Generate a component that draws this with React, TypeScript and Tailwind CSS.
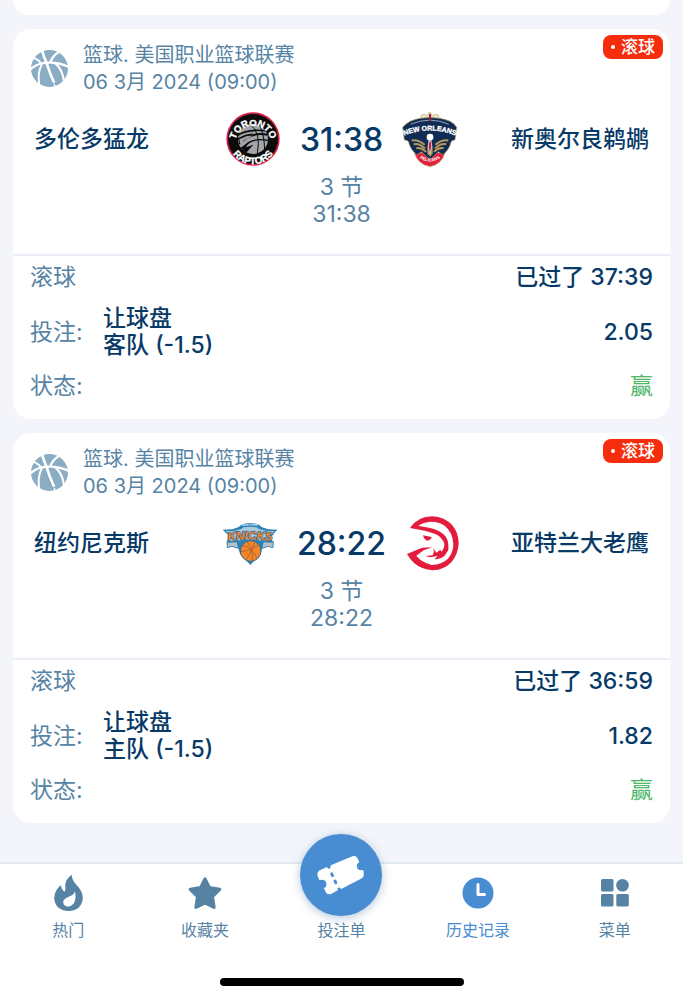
import React from "react";

type Bet = {
  home: string;
  away: string;
  homeLogo: React.ReactNode;
  awayLogo: React.ReactNode;
  score: string;
  elapsed: string;
  pick: string;
  odds: string;
};

function BasketballIcon() {
  return (
    <svg viewBox="92 149 112 112" className="size-[37px] shrink-0" aria-hidden="true">
      <circle cx="148" cy="205" r="56" fill="#8badc4" />
      <g fill="none" stroke="#fff" strokeWidth="7">
        <path d="M88 209 Q112 186 150 187 Q182 188 208 201" />
        <path d="M124 146 Q131 170 139 188 Q148 218 162 248" strokeWidth="8" />
        <path d="M162 252 L166 264" strokeWidth="4" />
        <path d="M100 173 Q119 180 124 194 Q111 218 117 256" strokeWidth="6" />
        <path d="M178 154 Q157 166 150 187" />
        <path d="M164 188 Q188 208 192 244" strokeWidth="6" />
      </g>
    </svg>
  );
}

function RaptorsLogo() {
  return (
    <svg viewBox="22 23 162 162" className="size-[54px]" role="img" aria-label="Toronto Raptors">
      <defs>
        <path id="raptors-top" d="M49 118 A54 54 0 1 1 157 118" />
        <path id="raptors-bottom" d="M31 95 A73 73 0 1 0 175 95" />
      </defs>
      <circle cx="103" cy="104" r="80" fill="#d21f45" />
      <circle cx="103" cy="104" r="75" fill="#0b0b0c" />
      <circle cx="103" cy="104" r="45" fill="#a3a5a8" />
      <g fill="none" stroke="#0b0b0c">
        <path d="M56 94 Q84 72 147 80" strokeWidth="5" />
        <path d="M62 119 Q92 82 147 91" strokeWidth="6" />
        <path d="M73 134 Q92 98 149 108" strokeWidth="4" />
        <path d="M94 60 Q128 82 116 148" strokeWidth="3" />
        <path d="M120 60 Q136 82 138 134" strokeWidth="3" />
      </g>
      <path d="M57 102 L80 91 L104 87 L86 100 L64 120 Z M66 130 L91 112 L82 129 L104 121 L82 146 Z" fill="#0b0b0c" />
      <path d="M62 105 L85 95 L101 94 L76 108 L66 124 Z" fill="#a3a5a8" />
      <g fill="#fff" stroke="#fff" strokeWidth="1" fontFamily="Liberation Sans, sans-serif" fontWeight="700" fontSize="29" textAnchor="middle">
        <text><textPath href="#raptors-top" startOffset="50%">TORONTO</textPath></text>
        <text><textPath href="#raptors-bottom" startOffset="50%">RAPTORS</textPath></text>
      </g>
    </svg>
  );
}

function PelicansLogo() {
  return (
    <svg viewBox="33 20 174 170" className="h-[57px] w-[58px]" role="img" aria-label="New Orleans Pelicans">
      <defs>
        <path id="pelicans-name" d="M38 95 Q119 61 201 95" />
        <path id="pelicans-sub" d="M76 150 Q119 192 164 150" />
      </defs>
      <path d="M92 38 Q98 22 111 35 L119 22 L128 35 Q141 22 147 38 L141 44 H98 Z" fill="#f4e9cf" stroke="#b4975a" strokeWidth="2" />
      <path d="M73 145 H165 Q154 181 120 186 Q85 181 73 145 Z" fill="#e2203f" stroke="#b4975a" strokeWidth="2" />
      <path d="M38 68 Q48 57 61 50 Q86 39 119 39 Q154 39 180 50 Q193 57 200 68 L195 106 Q183 109 183 113 Q178 136 158 151 L145 142 L120 166 L94 142 L81 151 Q61 136 56 113 Q55 108 43 106 Z" fill="#102c54" stroke="#b4975a" strokeWidth="2" />
      <path d="M62 59 Q119 35 176 59" fill="none" stroke="#d8dfe9" strokeWidth="2" />
      <text fill="#fff" stroke="#fff" strokeWidth="1" fontFamily="Liberation Sans, sans-serif" fontWeight="700" fontSize="21" textAnchor="middle">
        <textPath href="#pelicans-name" startOffset="50%">NEW ORLEANS</textPath>
      </text>
      <g fill="none" stroke="#b4975a" strokeWidth="6">
        <path d="M65 108 Q84 104 104 121" />
        <path d="M71 119 Q88 115 105 132" />
        <path d="M79 131 Q94 127 108 142" />
        <path d="M175 108 Q156 104 136 121" />
        <path d="M169 119 Q152 115 135 132" />
        <path d="M161 131 Q146 127 132 142" />
      </g>
      <path d="M112 128 H128 V148 L120 157 L112 148 Z" fill="#b4975a" />
      <circle cx="120" cy="98" r="10" fill="#fff" />
      <path d="M116 107 H124 L127 125 L120 151 L113 125 Z" fill="#d8dfe9" />
      <path d="M118 112 L123 112 L124 127 L120 144 L116 127 Z" fill="#c8213c" />
      <path d="M117 31 L120 26 L123 31 L124 49 H116 Z" fill="#8d2340" />
      <text fill="#fff" fontFamily="Liberation Sans, sans-serif" fontWeight="700" fontSize="13" textAnchor="middle">
        <textPath href="#pelicans-sub" startOffset="50%">PELICANS</textPath>
      </text>
    </svg>
  );
}

function KnicksLogo() {
  return (
    <svg viewBox="12 32 168 135" className="h-[45px] w-[56px]" role="img" aria-label="New York Knicks">
      <defs>
        <path id="knicks-name" d="M20 93 Q96 82 172 93" />
        <path id="knicks-city" d="M60 48 Q96 44 132 48" />
      </defs>
      <path d="M27 94 L59 88 L61 114 L42 108 L28 112 Z M166 94 L134 88 L132 114 L151 108 L165 112 Z" fill="#b9bfc4" stroke="#3486b8" strokeWidth="3" />
      <path d="M14 58 L42 57 L61 51 L72 42 Q96 34 121 42 L132 51 L151 57 L178 58 L159 78 L164 97 L137 96 L128 130 L97 164 L66 130 L56 96 L29 97 L34 78 Z" fill="#2b80b5" />
      <path d="M23 62 L45 62 L70 56 L76 51 Q96 47 117 51 L123 56 L148 62 L170 62 L154 77 L158 92 L138 92 L122 90 L97 88 L70 90 L54 92 L35 92 L39 78 Z" fill="#a9cadd" />
      <text fill="#f58426" stroke="#1f6a9d" strokeWidth="4" paintOrder="stroke" fontFamily="Liberation Sans, sans-serif" fontStyle="italic" fontWeight="700" fontSize="35" textAnchor="middle">
        <textPath href="#knicks-name" startOffset="50%">KNICKS</textPath>
      </text>
      <text fill="#fff" fontFamily="Liberation Sans, sans-serif" fontWeight="700" fontSize="9" textAnchor="middle">
        <textPath href="#knicks-city" startOffset="50%">NEW YORK</textPath>
      </text>
      <circle cx="98" cy="122" r="31" fill="#f58426" stroke="#2b6e9c" strokeWidth="3" />
      <g fill="none" stroke="#8a5a45" strokeWidth="2">
        <path d="M68 124 Q96 123 122 102 M86 93 Q106 114 103 153 M72 106 Q94 103 119 145 M111 94 Q101 124 84 150" />
      </g>
    </svg>
  );
}

function HawksLogo() {
  return (
    <svg viewBox="48 15 162 168" className="h-[56px] w-[54px]" role="img" aria-label="Atlanta Hawks">
      <path
        fill="#e31b3d"
        d="M60 54 Q82 20 127 19 Q164 21 187 46 Q205 67 206 99 Q205 133 184 157 Q162 180 128 181 Q95 179 73 160 Q60 148 51 132 L92 115 Q104 112 126 112 L101 121 L79 137 Q93 156 125 165 Q155 164 174 146 Q190 128 190 103 Q188 66 164 47 Q145 34 121 35 Q100 37 84 47 L121 54 Q153 61 168 81 Q177 96 175 120 L164 137 Q149 150 134 147 L143 138 L120 142 L107 138 L128 136 Q134 125 130 115 L139 128 L151 119 L154 125 Q164 114 163 101 Q157 83 138 73 Q115 63 60 54 Z"
      />
      <path d="M99 76 L125 81 Q123 91 111 92 Q102 89 99 76 Z" fill="#e31b3d" />
    </svg>
  );
}

const bets: Bet[] = [
  {
    home: "多伦多猛龙",
    away: "新奥尔良鹈鹕",
    homeLogo: <RaptorsLogo />,
    awayLogo: <PelicansLogo />,
    score: "31:38",
    elapsed: "37:39",
    pick: "客队 (-1.5)",
    odds: "2.05",
  },
  {
    home: "纽约尼克斯",
    away: "亚特兰大老鹰",
    homeLogo: <KnicksLogo />,
    awayLogo: <HawksLogo />,
    score: "28:22",
    elapsed: "36:59",
    pick: "主队 (-1.5)",
    odds: "1.82",
  },
];

function BetCard({ bet }: { bet: Bet }) {
  return (
    <article className="rounded-[18px] bg-white text-[23px] leading-[27px] text-[#5784a5]">
      <header className="flex items-start pt-[13px] pr-[7px] pl-[18px] text-[20px]">
        <div className="mt-2">
          <BasketballIcon />
        </div>
        <div className="ml-[15px] flex-1">
          <p>篮球. 美国职业篮球联赛</p>
          <p>06 3月 2024 (09:00)</p>
        </div>
        <span className="-mt-[7px] flex h-6 items-center gap-[6px] rounded-[8px] bg-[#f52d0c] px-2 text-[17px] font-medium text-white">
          <span className="size-1 rounded-full bg-white" />
          滚球
        </span>
      </header>

      <div className="mt-[13px] grid grid-cols-[1fr_auto_1fr] items-center px-[21px] text-[#083a68]">
        <h2 className="font-medium">{bet.home}</h2>
        <div className="flex h-[60px] items-center gap-[18px]">
          <div className="flex w-[58px] justify-center">{bet.homeLogo}</div>
          <strong className="text-[32px] font-medium">{bet.score}</strong>
          <div className="flex w-[58px] justify-center">{bet.awayLogo}</div>
        </div>
        <h2 className="text-right font-medium">{bet.away}</h2>
      </div>

      <div className="mt-[5px] border-b-2 border-[#e9eff4] pb-[26px] text-center">
        <p>3 节</p>
        <p>{bet.score}</p>
      </div>

      <dl className="flex flex-col gap-[14px] pt-2 pr-[17px] pb-[19px] pl-[17px]">
        <div className="flex justify-between">
          <dt>滚球</dt>
          <dd className="font-medium text-[#083a68]">已过了 {bet.elapsed}</dd>
        </div>
        <div className="flex items-center">
          <dt className="w-[73px]">投注:</dt>
          <dd className="flex-1 font-medium text-[#083a68]">
            让球盘
            <br />
            {bet.pick}
          </dd>
          <dd className="font-medium text-[#083a68]">{bet.odds}</dd>
        </div>
        <div className="flex justify-between">
          <dt>状态:</dt>
          <dd className="text-[#4db769]">赢</dd>
        </div>
      </dl>
    </article>
  );
}

function FlameIcon() {
  return (
    <svg viewBox="162 42 92 114" className="h-[38px] w-[31px]" aria-hidden="true">
      <path
        fill="#5682a3"
        fillRule="evenodd"
        d="M218 44 Q217 58 232 75 Q251 94 251 113 Q248 151 208 153 Q168 151 165 114 Q166 92 185 75 Q187 90 196 95 Q200 91 198 76 Q199 57 218 44 Z M227 94 Q226 105 207 111 Q193 117 192 126 Q193 139 207 140 Q226 138 229 114 Q230 102 227 94 Z"
      />
    </svg>
  );
}

function StarIcon() {
  return (
    <svg viewBox="563 44 102 102" className="size-[34px]" aria-hidden="true">
      <path
        d="M614 53 L627 79 L658 84 L636 106 L641 138 L614 124 L587 138 L592 106 L570 84 L601 79 Z"
        fill="#5682a3"
        stroke="#5682a3"
        strokeWidth="10"
        strokeLinejoin="round"
      />
    </svg>
  );
}

function ClockIcon() {
  return (
    <svg viewBox="0 0 32 32" className="size-[32px]" aria-hidden="true">
      <circle cx="16" cy="16" r="15.5" fill="#488cd2" />
      <path d="M16 7.5 V17.5 H22.5" fill="none" stroke="#fff" strokeWidth="3" strokeLinecap="round" strokeLinejoin="round" />
    </svg>
  );
}

function MenuIcon() {
  return (
    <svg viewBox="0 0 28 28" className="size-[28px]" fill="#5682a3" aria-hidden="true">
      <rect x="0" y="0" width="12.5" height="12.5" rx="1.5" />
      <circle cx="21.5" cy="6.3" r="6.3" />
      <rect x="0" y="15" width="12.5" height="12.5" rx="1.5" />
      <rect x="15.3" y="15" width="12.5" height="12.5" rx="1.5" />
    </svg>
  );
}

function TicketIcon() {
  return (
    <svg viewBox="83 88 144 121" className="h-[40px] w-[48px]" aria-hidden="true">
      <path
        fill="#fff"
        stroke="#fff"
        strokeWidth="4"
        strokeLinejoin="round"
        d="M90 137 L112 127 Q119 135 125 121 L190 94 Q199 91 203 98 L208 109 Q196 116 203 130 Q210 138 221 136 L222 149 Q222 154 216 157 L156 188 Q148 185 144 193 L124 204 Q116 207 111 200 L106 189 Q117 182 111 168 Q104 158 91 162 L86 150 Q84 141 90 137 Z"
      />
      <g stroke="#488cd2" strokeWidth="9" strokeLinecap="round">
        <path d="M117 120 L119 125" />
        <path d="M127 145 L129 150" />
        <path d="M137 167 L139 172" />
        <path d="M149 191 L151 196" />
      </g>
    </svg>
  );
}

function NavItem({ label, icon, active = false }: { label: string; icon: React.ReactNode; active?: boolean }) {
  return (
    <a
      href="#"
      aria-current={active ? "page" : undefined}
      className={
        active
          ? "flex flex-1 flex-col items-center text-[#488cd2]"
          : "flex flex-1 flex-col items-center text-[#5682a3]"
      }
    >
      <span className="flex h-10 items-center">{icon}</span>
      <span className="mt-[5px]">{label}</span>
    </a>
  );
}

export default function App() {
  return (
    <div className="flex min-h-screen flex-col bg-[#f3f5fa] font-['Inter','Noto_Sans_CJK_SC',sans-serif]">
      <main className="flex flex-1 flex-col gap-[14px] px-[13px] pb-[38px]">
        <div className="h-[15px] rounded-b-[18px] bg-white" />
        {bets.map((bet) => (
          <BetCard key={bet.home} bet={bet} />
        ))}
      </main>

      <footer className="sticky bottom-0 border-t-2 border-[#e1e8f0] bg-white pt-[9px] pb-[14px]">
        <nav className="flex text-[16px] leading-6">
          <NavItem label="热门" icon={<FlameIcon />} />
          <NavItem label="收藏夹" icon={<StarIcon />} />
          <a href="#" className="-mt-[39px] flex flex-1 flex-col items-center text-[#5682a3]">
            <span className="flex size-[82px] items-center justify-center rounded-full bg-[#488cd2] shadow-[0_2px_10px_rgba(72,120,170,0.4)]">
              <TicketIcon />
            </span>
            <span className="mt-[2px]">投注单</span>
          </a>
          <NavItem label="历史记录" icon={<ClockIcon />} active />
          <NavItem label="菜单" icon={<MenuIcon />} />
        </nav>
        <div className="mx-auto mt-[36px] h-2 w-[244px] rounded-full bg-black" />
      </footer>
    </div>
  );
}
